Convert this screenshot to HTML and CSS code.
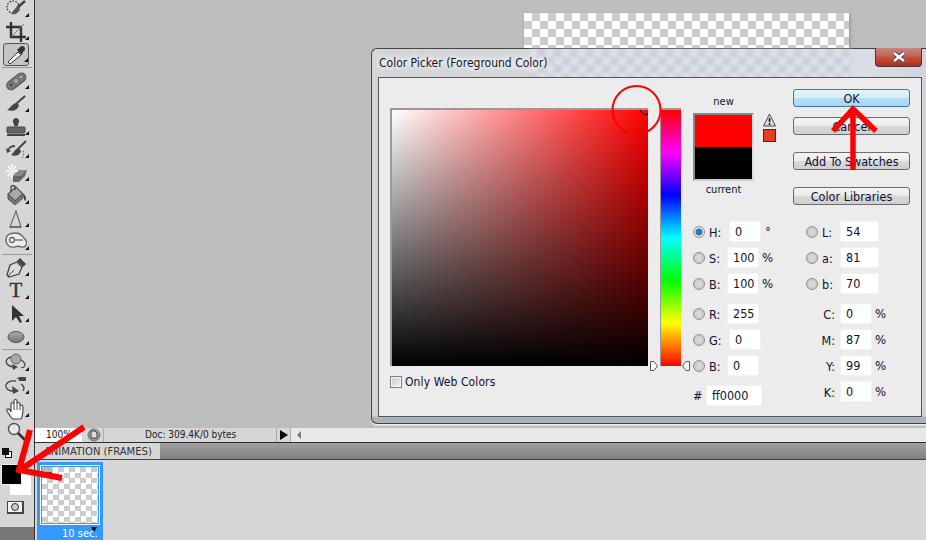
FILE: index.html
```html
<!DOCTYPE html>
<html lang="en">
<head>
    <meta charset="UTF-8">
    <title>Color Picker</title>
    <link rel="stylesheet" href="styles.css">
</head>
<body>

<div class="app">
    <!-- tools -->
    <div class="toolbar">
        <div class="tool more"><svg viewBox="0 0 22 22"><circle cx="8" cy="9" r="6" fill="none" stroke="#222" stroke-width="1.2" stroke-dasharray="1.5 1.5"/><path d="M20 3 12 10" stroke="#444" stroke-width="2.4"/><path d="M13 9c-4 1-5 5-7 7 4 1 8-1 9-5z" fill="#555"/></svg></div>
        <div class="tool more"><svg viewBox="0 0 22 22"><path d="M6 1v15h15M1 6h15v15" fill="none" stroke="#333" stroke-width="2.4"/><path d="M6 16 19 3" stroke="#777"/></svg></div>
        <div class="tool more selected"><svg viewBox="0 0 22 22"><path d="M5 20 3 18 13 8l3 3z" fill="#fff" stroke="#333"/><path d="m12 6 5 5 1-3 1-1c3-3-1-7-4-4l-1 1z" fill="#333"/></svg></div>
        <div class="sep"></div>
        <div class="tool more"><svg viewBox="0 0 22 22"><rect x="0" y="7" width="22" height="9" rx="4.5" transform="rotate(-38 11 11)" fill="#777" stroke="#555"/><circle cx="11" cy="11" r="2" fill="#aaa"/><circle cx="6" cy="15" r="1" fill="#333"/><circle cx="16" cy="7" r="1" fill="#ccc"/></svg></div>
        <div class="tool more"><svg viewBox="0 0 22 22"><path d="M20 3 11 11" stroke="#444" stroke-width="2"/><path d="M12 10c-5 0-6 5-10 7 6 2 11 0 12-5z" fill="#444"/></svg></div>
        <div class="tool more"><svg viewBox="0 0 22 22"><path d="M9 10V8C7 6 8 2 11 2s4 4 2 6v2z" fill="#444"/><rect x="2" y="11" width="18" height="6" rx="1" fill="#666" stroke="#444"/><rect x="2" y="18" width="18" height="2" fill="#444"/></svg></div>
        <div class="tool more"><svg viewBox="0 0 22 22"><path d="M21 2 13 10" stroke="#444" stroke-width="2"/><path d="M14 9c-4 0-5 5-8 7 5 2 9 0 10-4z" fill="#444"/><path d="M18 12c2 3 0 6-2 8" fill="none" stroke="#555" stroke-dasharray="1.5 1.5"/><path d="M10 6C7 6 4 7 3 10l-2-1 1 5 4-2-2-1c1-2 3-3 6-3z" fill="#444"/></svg></div>
        <div class="tool more"><svg viewBox="0 0 22 22"><path d="m8 14 6-6h8l-2 6-6 6H8z" fill="#666"/><path d="m14 8h8l-6 6H8z" fill="#888"/><path d="M7 2v4M7 12v4M1 9h4M10 9h3M3 4l2 3M11 4 9 7M3 14l2-3" stroke="#fff" stroke-width="1.4"/><circle cx="7" cy="9" r="3" fill="#eee"/></svg></div>
        <div class="tool more"><svg viewBox="0 0 22 22"><path d="M3 9 10 16 18 9 11 2z" fill="#aaa" stroke="#555" stroke-width="1.2"/><path d="M3 9v5l7 6 8-7V9l-8 7z" fill="#777" stroke="#555"/><path d="M6 7V2c0-2 4-2 4 0v3" fill="none" stroke="#444" stroke-width="1.3"/><path d="M18 9c3 1 3 4 3 6-1 2-2 0-2-2z" fill="#444"/></svg></div>
        <div class="tool more"><svg viewBox="0 0 22 22"><path d="M11 3 5 19h11z" fill="none" stroke="#666" stroke-width="1.1"/><path d="M5 19h11" stroke="#444"/></svg></div>
        <div class="tool more"><svg viewBox="0 0 22 22"><path d="M1 9c0-5 4-7 9-7 4 0 7 2 9 5 2 2 3 5 2 7-1 3-3 2-5 2-2-1-4-1-6 0-5 1-9-2-9-7z" fill="#eee" stroke="#666" stroke-width="1.3"/><circle cx="7" cy="9" r="2.5" fill="none" stroke="#666" stroke-width="1.3"/><path d="M9 9h9" stroke="#666" stroke-width="1.3"/></svg></div>
        <div class="sep"></div>
        <div class="tool more"><svg viewBox="0 0 22 22"><path d="M2 18 5 8l7-3 5 5-3 7-10 3z" fill="#ddd" stroke="#444" stroke-width="1.3"/><path d="M12 4 15 1l6 6-3 3z" fill="#444"/><path d="m3 19 6-6" stroke="#444"/></svg></div>
        <div class="tool more"><span class="type-t">T</span></div>
        <div class="tool more"><svg viewBox="0 0 22 22"><path d="M7 2v16l4-4 4 6 2-1-3-6h5z" fill="#333"/></svg></div>
        <div class="tool more"><svg viewBox="0 0 22 22"><defs><linearGradient id="ell" x1="0" y1="0" x2="0" y2="1"><stop offset="0" stop-color="#aaa"/><stop offset="1" stop-color="#777"/></linearGradient></defs><ellipse cx="11" cy="11" rx="8" ry="5.5" fill="url(#ell)" stroke="#555"/></svg></div>
        <div class="sep"></div>
        <div class="tool more"><svg viewBox="0 0 22 22"><circle cx="11" cy="7" r="5" fill="#aaa" stroke="#666"/><path d="M6 5C2 6 0 9 2 12c2 2 5 3 8 3" fill="none" stroke="#444" stroke-width="1.3"/><path d="m7 12 6 3-5 3z" fill="#444"/><path d="M16 8c4 2 5 5 3 7l-3 1" fill="none" stroke="#444" stroke-width="1.3"/></svg></div>
        <div class="tool more"><svg viewBox="0 0 22 22"><rect x="14" y="2" width="7" height="4" fill="#444"/><path d="M12 3 14 4M11 6C5 5 0 8 1 12c1 3 4 4 7 4" fill="none" stroke="#444" stroke-width="1.3"/><path d="m7 11 7 5-6 3z" fill="#444"/><path d="M16 9c3 2 4 4 2 7" fill="none" stroke="#444" stroke-width="1.3"/></svg></div>
        <div class="tool more"><svg viewBox="0 0 22 22"><path d="M8 21c-3-2-4-5-6-8-1-2 1-3 3-1l1 2V6c0-2 2-2 3 0V3c0-2 3-2 3 0v3c0-2 3-2 3 0v2c0-2 3-1 3 1 0 5 0 9-2 12z" fill="#fff" stroke="#444" stroke-width="1.2"/><path d="M9 6v6M12 6v6M15 8v4" stroke="#444"/></svg></div>
        <div class="tool"><svg viewBox="0 0 22 22"><circle cx="9" cy="8" r="5.5" fill="#e8e8e8" stroke="#555" stroke-width="1.4"/><path d="m13 12 7 7" stroke="#333" stroke-width="2.6"/></svg></div>
        <div class="colors">
            <div class="mini-colors"><span class="mini-bg"></span><span class="mini-fg"></span></div>
            <div class="swatches"><span class="bg-color"></span><span class="fg-color"></span></div>
            <div class="mask-btn"><span></span></div>
        </div>
        <div class="tool-foot"></div>
    </div>

    <!-- document area and panel -->
    <div class="work">
        <div class="canvas-area"><div class="doc checker"></div></div>
        <div class="status">
            <div class="zoom-field">100%</div>
            <div class="status-icon"><svg viewBox="0 0 14 14" width="14" height="14"><circle cx="7" cy="7" r="6" fill="#999" stroke="#777"/><path d="M4 3h4l2 2v5H4z" fill="#ddd" stroke="#444"/></svg></div>
            <div class="doc-info">Doc: 309.4K/0 bytes</div>
            <div class="status-arrow"></div>
            <div class="scroll-track"><span class="scroll-left"></span></div>
        </div>
        <div class="tabs"><div class="tab">ANIMATION (FRAMES)</div></div>
        <div class="frames">
            <div class="frame">
                <div class="thumb"><div class="thumb-inner checker-small"><span class="frame-tag"></span></div></div>
                <div class="frame-time">10 sec.<span class="time-arrow"></span></div>
            </div>
        </div>
    </div>
</div>

<!-- color picker dialog -->
<div class="dialog">
    <div class="titlebar">
        <span class="title">Color Picker (Foreground Color)</span>
        <div class="close"><svg viewBox="0 0 16 12" width="16" height="12"><path d="M3 2 13 10M13 2 3 10" stroke="#445" stroke-width="4.4"/><path d="M3 2 13 10M13 2 3 10" stroke="#fff" stroke-width="2.6"/></svg></div>
    </div>
    <div class="panel">
        <div class="left-col">
            <div class="sv-field"><span class="sv-cursor"></span></div>
            <label class="web-only"><span class="checkbox"></span>Only Web Colors</label>
        </div>
        <div class="hue">
            <svg class="hue-mark mark-l" viewBox="0 0 8 10" width="8" height="10"><path d="M.5.5H4L7.5 5 4 9.500H.5z" fill="#fff" stroke="#555"/></svg>
            <svg class="hue-mark mark-r" viewBox="0 0 8 10" width="8" height="10"><path d="M7.500.5H4L.5 5 4 9.500h3.500z" fill="#fff" stroke="#555"/></svg>
        </div>
        <div class="right-col">
            <div class="top-row">
                <div class="preview">
                    <div class="preview-label first">new</div>
                    <div class="preview-row">
                        <div class="preview-box"><span class="new-color"></span><span class="cur-color"></span></div>
                        <div class="gamut">
                            <svg viewBox="0 0 13 14" width="13" height="14"><path d="M6.500 1 12.500 13H.5z" fill="#ddd" stroke="#444"/><path d="M6.500 5v4M6.500 10v2" stroke="#111" stroke-width="1.500"/></svg>
                            <span class="gamut-color"></span>
                        </div>
                    </div>
                    <div class="preview-label">current</div>
                </div>
                <div class="buttons">
                    <div class="btn primary">OK</div>
                    <div class="btn">Cancel</div>
                    <div class="btn">Add To Swatches</div>
                    <div class="btn">Color Libraries</div>
                </div>
            </div>
            <div class="fields">
                <div class="field-col left-fields">
                    <div class="row"><span class="radio on"></span><span class="lab">H:</span><span class="val shift">0</span><span class="unit deg">°</span></div>
                    <div class="row"><span class="radio"></span><span class="lab">S:</span><span class="val">100</span><span class="unit">%</span></div>
                    <div class="row"><span class="radio"></span><span class="lab">B:</span><span class="val">100</span><span class="unit">%</span></div>
                    <div class="row split"><span class="radio"></span><span class="lab">R:</span><span class="val">255</span></div>
                    <div class="row"><span class="radio"></span><span class="lab">G:</span><span class="val shift">0</span></div>
                    <div class="row"><span class="radio"></span><span class="lab">B:</span><span class="val">0</span></div>
                    <div class="row split"><span class="hash">#</span><span class="val hex">ff0000</span></div>
                </div>
                <div class="field-col">
                    <div class="row"><span class="radio"></span><span class="lab">L:</span><span class="val lab-val">54</span></div>
                    <div class="row"><span class="radio"></span><span class="lab">a:</span><span class="val lab-val">81</span></div>
                    <div class="row"><span class="radio"></span><span class="lab">b:</span><span class="val lab-val">70</span></div>
                    <div class="row split"><span class="lab cmyk">C:</span><span class="val">0</span><span class="unit">%</span></div>
                    <div class="row"><span class="lab cmyk">M:</span><span class="val">87</span><span class="unit">%</span></div>
                    <div class="row"><span class="lab cmyk">Y:</span><span class="val">99</span><span class="unit">%</span></div>
                    <div class="row"><span class="lab cmyk">K:</span><span class="val">0</span><span class="unit">%</span></div>
                </div>
            </div>
        </div>
    </div>
</div>

<!-- red marks drawn on the screenshot -->
<svg class="marks" viewBox="0 0 926 540" width="926" height="540">
    <circle cx="636.500" cy="110" r="24" fill="none" stroke="#f00" stroke-width="2"/>
    <path d="M853 170V110M833 131 853 109 876 131" fill="none" stroke="#f00" stroke-width="5.500"/>
    <path d="M84 427 20 470M30 430 19 470 62 478" fill="none" stroke="#f00" stroke-width="6"/>
</svg>

</body>
</html>
```

FILE: styles.css
```css
* {
    box-sizing: border-box;
}
html, body {
    margin: 0;
    height: 540px;
    overflow: hidden;
}
body {
    position: relative;
    font-family: "DejaVu Sans Condensed", "DejaVu Sans", sans-serif;
    font-size: 12px;
    color: #101030;
}
.app {
    display: flex;
    height: 540px;
}

/* tools */
.toolbar {
    width: 35px;
    flex: none;
    display: flex;
    flex-direction: column;
    background: #d6d6d6;
    border-right: 1.5px solid #333;
    margin-top: -3px;
    height: 543px;
}
.tool {
    position: relative;
    height: 23px;
    flex: none;
    margin: 0 5px 0 3px;
    display: flex;
    align-items: center;
    justify-content: center;
}
.tool svg {
    width: 22px;
    height: 22px;
    flex: none;
}
.tool.more::after {
    content: "";
    position: absolute;
    right: 0;
    bottom: 3px;
    border-left: 4px solid transparent;
    border-bottom: 4px solid #111;
}
.tool.selected {
    background: #c4c4c4;
    border: 1px solid #555;
    border-radius: 3px;
}
.sep {
    height: 1px;
    margin: 1px 2px;
    background: #9a9a9a;
    flex: none;
}
.type-t {
    font-family: "Liberation Serif", serif;
    font-size: 21px;
    color: #333;
    -webkit-text-stroke: .4px #333;
}
.colors {
    padding: 0 0 0 1px;
    flex: none;
}
.mini-colors {
    position: relative;
    height: 12px;
    margin: 4px 0 5px 1px;
}
.mini-colors span {
    position: absolute;
    width: 7px;
    height: 7px;
    border: 1px solid #111;
}
.mini-bg {
    left: 3px;
    top: 4px;
    background: #fff;
}
.mini-fg {
    left: 0;
    top: 1px;
    background: #111;
}
.swatches {
    position: relative;
    height: 37px;
}
.swatches span {
    position: absolute;
}
.bg-color {
    left: 9px;
    top: 10px;
    width: 21px;
    height: 21px;
    background: #fff;
}
.fg-color {
    left: 0;
    top: 0;
    width: 21px;
    height: 21px;
    background: #000;
    border: 1px solid #eee;
}
.mask-btn {
    width: 17px;
    height: 13px;
    margin: 0 0 0 6px;
    background: #f2f2f2;
    border: 1px solid #444;
    border-width: 1px 2px 2px 1px;
    display: flex;
    align-items: center;
    justify-content: center;
}
.mask-btn span {
    width: 8px;
    height: 8px;
    border-radius: 50%;
    background: #ccc;
    border: 1px solid #333;
}
.tool-foot {
    margin-top: auto;
    height: 13px;
    background: #777;
}

/* work area */
.work {
    flex: 1;
    display: flex;
    flex-direction: column;
    min-width: 0;
}
.canvas-area {
    height: 428px;
    flex: none;
    padding: 13px 0 0 489px;
    background: #bdbdbd;
}
.doc {
    width: 325px;
    height: 120px;
    box-shadow: 1px 1px 3px #8f8f8f;
}
.checker {
    background: repeating-conic-gradient(#ccc 0 25%, #fff 0 50%) 0 0 / 16px 16px;
}
.checker-small {
    background: repeating-conic-gradient(#ccc 0 25%, #fff 0 50%) 0 0 / 11px 11px;
}
.status {
    height: 14px;
    flex: none;
    display: flex;
    background: #d6d6d6;
    font-size: 10px;
    line-height: 14px;
    color: #222;
}
.zoom-field {
    width: 47px;
    background: #fff;
    padding-left: 11px;
    color: #111;
}
.status-icon {
    width: 22px;
    padding-left: 5px;
    border-right: 1px solid #aaa;
}
.doc-info {
    width: 172px;
    padding-left: 41px;
    white-space: nowrap;
}
.status-arrow {
    width: 15px;
    border-left: 1px solid #aaa;
    border-right: 1px solid #aaa;
    position: relative;
}
.status-arrow::after {
    content: "";
    position: absolute;
    left: 3px;
    top: 2px;
    border-left: 8px solid #000;
    border-top: 5px solid transparent;
    border-bottom: 5px solid transparent;
}
.scroll-track {
    flex: 1;
    background: #e8e8e8;
    padding: 3px 0 0 6px;
}
.scroll-left {
    display: block;
    width: 0;
    border-right: 4px solid #777;
    border-top: 4px solid transparent;
    border-bottom: 4px solid transparent;
}
.tabs {
    height: 18px;
    flex: none;
    border-top: 1px solid #2f2f2f;
    border-bottom: 1px solid #444;
    background: linear-gradient(#a0a0a0, #828282);
}
.tab {
    width: 125px;
    height: 16px;
    background: #d6d6d6;
    font-family: "DejaVu Sans", sans-serif;
    font-size: 10px;
    line-height: 17px;
    padding-left: 9px;
    color: #333;
    white-space: nowrap;
}
.frames {
    flex: 1;
    background: #d6d6d6;
    padding: 2px 0 0 2px;
}
.frame {
    width: 66px;
    height: 78px;
    background: #3399ff;
    padding: 3px;
}
.thumb {
    width: 60px;
    height: 60px;
    border: 1px solid #fff;
    padding: 1px;
}
.thumb-inner {
    position: relative;
    width: 100%;
    height: 100%;
}
.frame-tag {
    position: absolute;
    left: 0;
    top: 0;
    width: 10px;
    height: 6px;
    background: #b9b9b9;
    border-bottom: 1px solid #555;
}
.frame-time {
    position: relative;
    color: #fff;
    font-size: 11px;
    line-height: 12px;
    padding: 3px 0 0 22px;
    white-space: nowrap;
}
.time-arrow {
    position: absolute;
    left: 51px;
    top: 2px;
    border-top: 5px solid #111;
    border-left: 3px solid transparent;
    border-right: 3px solid transparent;
}

/* dialog */
.dialog {
    position: absolute;
    left: 371px;
    top: 48px;
    width: 555px;
    height: 376px;
    padding: 0 4px 6px 6px;
    border: 1px solid #444;
    border-right: 0;
    border-radius: 6px 0 0 6px;
    display: flex;
    flex-direction: column;
    background:
        linear-gradient(#0000 366px, #aab2bb 369px),
        linear-gradient(90deg, #d4d5d7 0, #d4d5d7 150px, #d7dce5 190px, #d9dde6 500px, #cfd4dc 100%);
    box-shadow: 0 1px 0 #eee, 0 2px 2px #ddd;
}
.dialog::before {
    content: "";
    position: absolute;
    left: 158px;
    top: 0;
    width: 322px;
    height: 28px;
    background: repeating-conic-gradient(#c4cad6 0 25%, #dfe3ea 0 50%) 0 0 / 16px 16px;
    filter: blur(1.500px);
    opacity: .7;
}
.titlebar {
    position: relative;
    height: 28px;
    flex: none;
    display: flex;
    justify-content: space-between;
    padding-left: 1px;
}
.title {
    font-size: 12px;
    line-height: 28px;
    color: #101828;
    text-shadow: 0 0 6px #fff, 0 0 6px #fff, 0 0 8px #fff;
}
.close {
    width: 47px;
    height: 19px;
    margin: -1px 0 0 0;
    border: 1px solid #5a3030;
    border-top: 0;
    border-radius: 0 0 4px 4px;
    background: linear-gradient(#c9867c 0, #bb6a60 40%, #d24a30 55%, #c2432c 70%, #8f3a30 100%);
    display: flex;
    align-items: center;
    justify-content: center;
}
.panel {
    flex: 1;
    background: #ececec;
    border: 1px solid #555;
    display: flex;
    position: relative;
}
.left-col {
    margin: 30px 0 0 11px;
    width: 258px;
    flex: none;
}
.sv-field {
    position: relative;
    width: 258px;
    height: 258px;
    overflow: hidden;
    border: 2px solid #999;
    border-width: 2px 0 0 2px;
    background:
        linear-gradient(to top, #000, rgba(0, 0, 0, 0)),
        linear-gradient(to right, #fff, #f00);
}
.sv-cursor {
    position: absolute;
    right: -3px;
    top: -6px;
    width: 11px;
    height: 11px;
    border: 1px solid #000;
    border-radius: 50%;
}
.web-only {
    display: flex;
    align-items: center;
    gap: 3px;
    margin-top: 9px;
    line-height: 14px;
    letter-spacing: .1px;
}
.checkbox {
    width: 12px;
    height: 12px;
    border: 1px solid #808080;
    background: linear-gradient(135deg, #c8c8c8, #f4f4f4);
    box-shadow: inset 0 0 0 1px #f4f4f4;
}
.hue {
    position: relative;
    margin: 32px 0 0 12px;
    width: 21px;
    height: 256px;
    flex: none;
    border-left: 1px solid #999;
    background: linear-gradient(#f00, #f0f 16.670%, #00f 33.330%, #0ff 50%, #0f0 66.670%, #ff0 83.330%, #f00);
    box-shadow: 0 -2px 0 #999;
}
.hue-mark {
    position: absolute;
    bottom: -5px;
}
.mark-l {
    left: -11px;
}
.mark-r {
    right: -9px;
}
.right-col {
    margin-left: 12px;
    flex: 1;
}
.top-row {
    margin-top: 11px;
    height: 132px;
    display: flex;
}
.preview {
    width: 100px;
    flex: none;
}
.preview-label {
    width: 61px;
    text-align: center;
    line-height: 14px;
    font-size: 11px;
    margin-top: 2px;
}
.preview-label.first {
    margin: 6px 0 4px;
}
.preview-row {
    display: flex;
    gap: 9px;
}
.preview-box {
    width: 61px;
    height: 68px;
    background: #000;
    border: 2px solid #888;
    border-bottom-color: #ccc;
    border-right-color: #ddd;
    display: flex;
    flex-direction: column;
}
.new-color {
    flex: 1;
    background: #f00;
}
.cur-color {
    flex: 1;
    background: #000;
}
.gamut {
    display: flex;
    flex-direction: column;
    gap: 2px;
}
.gamut-color {
    width: 13px;
    height: 13px;
    background: #e33f22;
    border: 1px solid #333;
}
.buttons {
    width: 117px;
    flex: none;
    display: flex;
    flex-direction: column;
    gap: 17px;
}
.btn {
    height: 18px;
    border: 1px solid #6c6c6c;
    border-radius: 3px;
    background: linear-gradient(#f4f4f4 0, #ebebeb 50%, #d8d8d8 52%, #cfcfcf 100%);
    text-align: center;
    font-size: 12.500px;
    line-height: 17px;
    color: #101030;
}
.btn.primary {
    border-color: #3a79a5;
    background: linear-gradient(#e3f3fc 0, #d4ecfa 50%, #b6def6 52%, #a9d8f4 100%);
}
.buttons .btn:nth-child(1) {
    margin-bottom: -7px;
}
.fields {
    display: flex;
}
.field-col {
    flex: none;
}
.left-fields {
    width: 113px;
}
.row {
    height: 21px;
    margin-bottom: 5px;
    display: flex;
    align-items: center;
    font-size: 12.500px;
}
.row.split {
    margin-top: 9px;
}
.radio {
    width: 12px;
    height: 12px;
    flex: none;
    border-radius: 50%;
    border: 1px solid #8f8f8f;
    background: radial-gradient(circle, #dcdcdc, #c4c4c4);
    margin-right: 4px;
}
.radio.on {
    background: radial-gradient(circle, #1d7fb5 0 3px, #e6e6e6 4px);
}
.lab {
    width: 18px;
    flex: none;
    padding-top: 1px;
}
.lab.cmyk {
    width: 30px;
    padding-right: 1px;
    text-align: right;
    margin-right: 4px;
}
.val {
    width: 32px;
    height: 21px;
    flex: none;
    background: #fff;
    border: 1px solid #f2f2f2;
    border-radius: 2px;
    padding-left: 5px;
    line-height: 20px;
}
.val.shift {
    margin-left: 2px;
    padding-left: 5px;
}
.val.lab-val {
    width: 39px;
}
.val.hex {
    width: 56px;
}
.hash {
    width: 13px;
    flex: none;
}
.unit {
    margin-left: 3px;
    font-size: 13px;
}
.unit.deg {
    margin-left: 4px;
}

.marks {
    position: absolute;
    left: 0;
    top: 0;
    pointer-events: none;
}
```
